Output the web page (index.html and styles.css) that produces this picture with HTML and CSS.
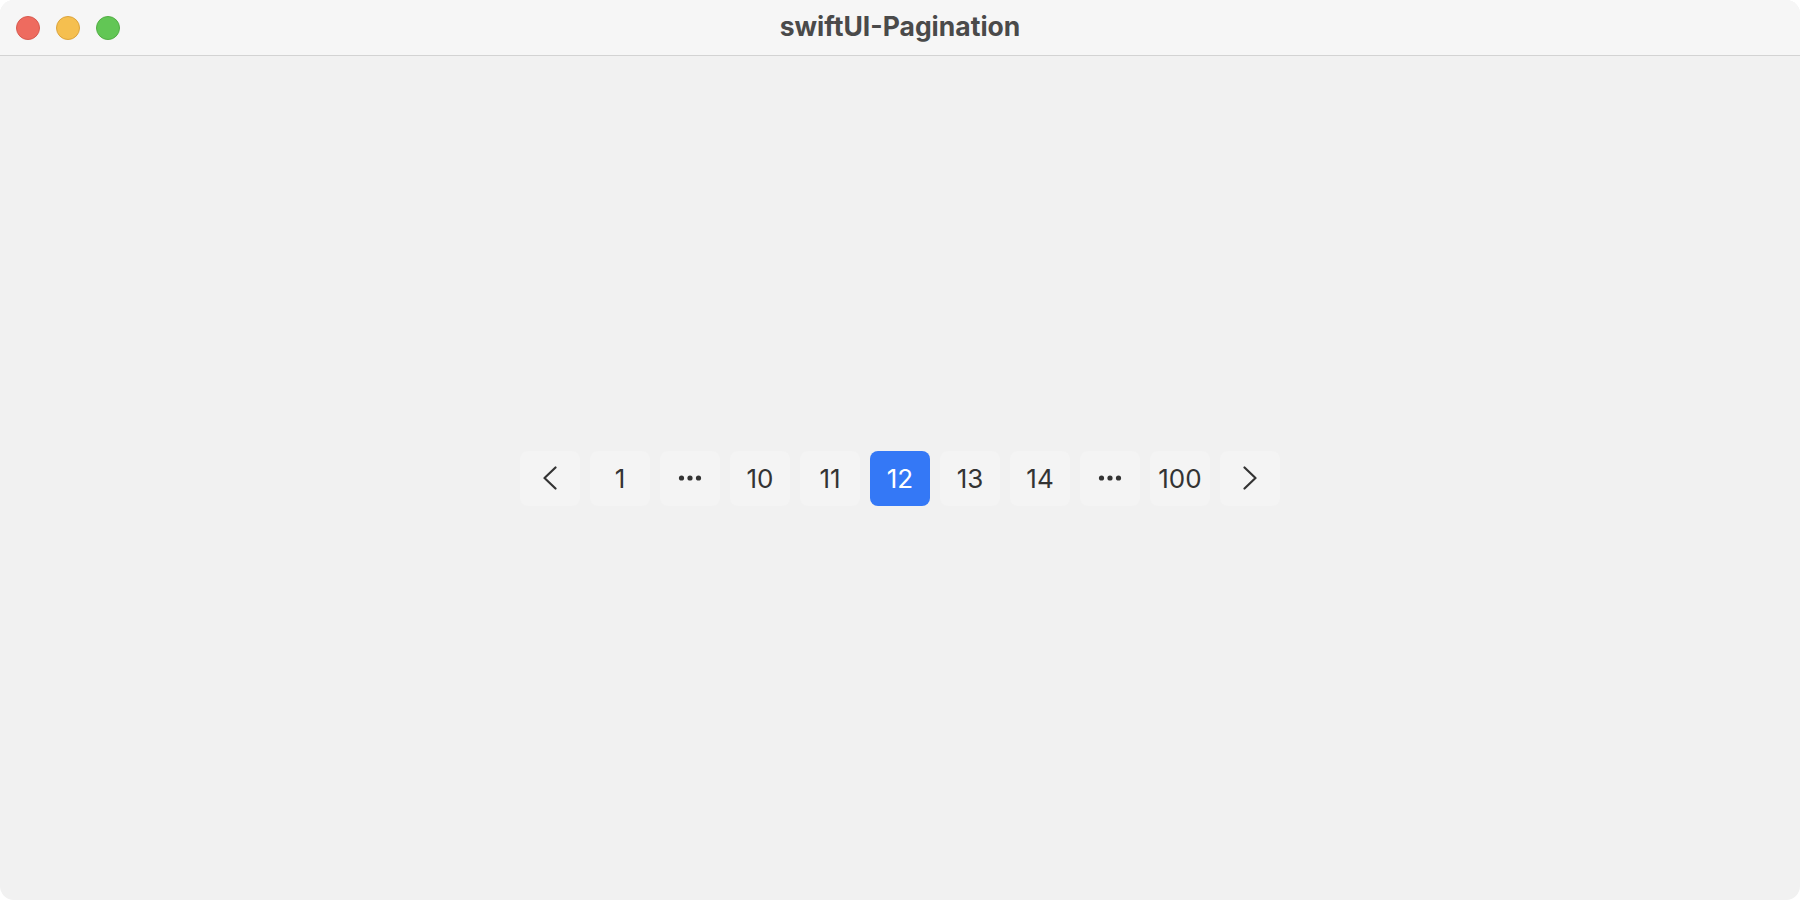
FILE: index.html
```html
<!DOCTYPE html>
<html>
<head>
<meta charset="utf-8">
<link rel="stylesheet" href="styles.css">
</head>
<body>
<div class="window">
  <header class="titlebar">
    <div class="lights">
      <span class="light red"></span>
      <span class="light yellow"></span>
      <span class="light green"></span>
    </div>
    <div class="title">swiftUI-Pagination</div>
  </header>
  <main class="content">
    <nav class="pager">
      <button class="page"><svg width="16" height="24" viewBox="0 0 16 24"><path d="M13.5 1.5 L2.5 12 L13.5 22.5" fill="none" stroke="#333" stroke-width="2.2" stroke-linecap="round" stroke-linejoin="round"/></svg></button>
      <button class="page">1</button>
      <button class="page"><svg width="24" height="6" viewBox="0 0 24 6"><circle cx="3.5" cy="3" r="2.6" fill="#333"/><circle cx="12" cy="3" r="2.6" fill="#333"/><circle cx="20.5" cy="3" r="2.6" fill="#333"/></svg></button>
      <button class="page">10</button>
      <button class="page">11</button>
      <button class="page active">12</button>
      <button class="page">13</button>
      <button class="page">14</button>
      <button class="page"><svg width="24" height="6" viewBox="0 0 24 6"><circle cx="3.5" cy="3" r="2.6" fill="#333"/><circle cx="12" cy="3" r="2.6" fill="#333"/><circle cx="20.5" cy="3" r="2.6" fill="#333"/></svg></button>
      <button class="page">100</button>
      <button class="page"><svg width="16" height="24" viewBox="0 0 16 24"><path d="M2.5 1.5 L13.5 12 L2.5 22.5" fill="none" stroke="#333" stroke-width="2.2" stroke-linecap="round" stroke-linejoin="round"/></svg></button>
    </nav>
  </main>
</div>
</body>
</html>
```
FILE: styles.css
```css
html, body {
  margin: 0;
  padding: 0;
  background: #ffffff;
  width: 1800px;
  height: 900px;
  overflow: hidden;
}
.window {
  width: 1800px;
  height: 900px;
  border-radius: 14px;
  overflow: hidden;
  display: flex;
  flex-direction: column;
  background: #f1f1f1;
  font-family: "Inter", "Liberation Sans", sans-serif;
}
.titlebar {
  height: 56px;
  flex: none;
  box-sizing: border-box;
  background: #f6f6f6;
  border-bottom: 1px solid #d3d3d3;
  display: flex;
  align-items: center;
  justify-content: center;
  position: relative;
}
.lights {
  position: absolute;
  left: 16px;
  top: 16px;
  display: flex;
  gap: 16px;
}
.light {
  width: 24px;
  height: 24px;
  border-radius: 50%;
  box-sizing: border-box;
}
.red { background: #ee6b5f; border: 1px solid #d85a4f; }
.yellow { background: #f5bf4f; border: 1px solid #dca43c; }
.green { background: #62c655; border: 1px solid #52ae44; }
.title {
  font-size: 26.5px;
  font-weight: 700;
  color: #4a4a4a;
  margin-top: -3px;
}
.content {
  flex: 1;
  display: flex;
  align-items: center;
  justify-content: center;
}
.pager {
  display: flex;
  gap: 10px;
}
.page {
  width: 60px;
  height: 55px;
  border: none;
  border-radius: 8px;
  background: #f4f4f4;
  color: #333333;
  font-family: "Inter", "Liberation Sans", sans-serif;
  font-size: 26px;
  font-weight: 400;
  display: flex;
  align-items: center;
  justify-content: center;
  padding: 0;
}
.page.active {
  background: #3478f6;
  color: #ffffff;
}
```
